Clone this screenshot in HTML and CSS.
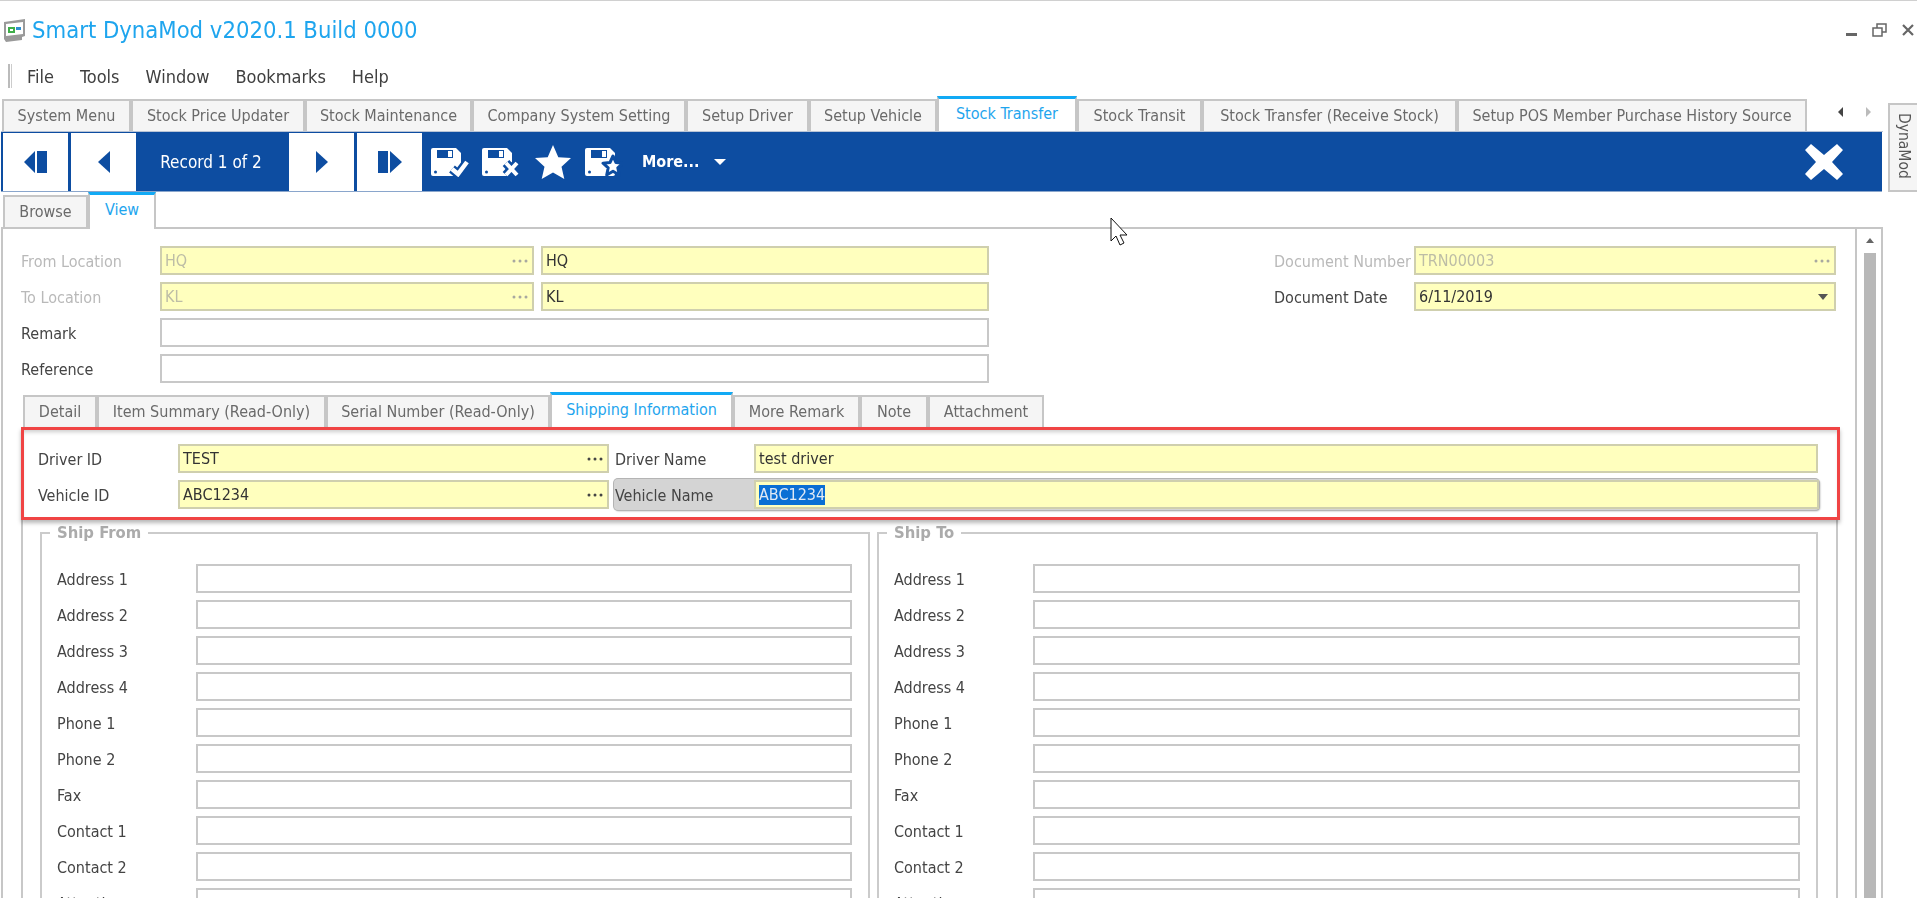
FILE: index.html
```html
<!DOCTYPE html>
<html lang="en">
<head>
<meta charset="utf-8">
<title>Smart DynaMod</title>
<link rel="stylesheet" href="styles.css">
</head>
<body>
<svg class="defs" width="0" height="0" aria-hidden="true">
  <symbol id="dots" viewBox="0 0 16 4"><circle cx="2" cy="2" r="1.5"/><circle cx="8" cy="2" r="1.5"/><circle cx="14" cy="2" r="1.5"/></symbol>
  <symbol id="floppy" viewBox="0 0 38 30">
    <path fill="#fff" d="M2 1h23l5 5v21a2 2 0 0 1-2 2H2a2 2 0 0 1-2-2V3a2 2 0 0 1 2-2z"/>
    <path fill="#0d4da1" d="M6 3h16v8H6z"/>
    <path fill="#fff" d="M17 4h4v6h-4z"/>
    <circle cx="4.500" cy="25" r="1.500" fill="#0d4da1"/>
  </symbol>
</svg>
<div class="app">
  <header class="titlebar">
    <svg class="appicon" viewBox="0 0 23 23" width="23" height="23">
      <path fill="#9a9a9a" d="M1 3l21-3v17l-3 1 0 3-16 2-2-3z"/>
      <path fill="#fff" d="M3 5l17-2v12L3 17z"/>
      <path fill="#3fae49" d="M5 8h7v6H5z"/>
      <path fill="#fff" d="M7 10h3v2H7z"/>
      <path fill="#2f8fd0" d="M13 8h5v3h-5z"/>
    </svg>
    <h1 class="apptitle">Smart DynaMod v2020.1 Build 0000</h1>
    <div class="winbtns">
      <svg viewBox="0 0 11 3" width="11" height="3"><path fill="#666" d="M0 0h11v3H0z"/></svg>
      <svg viewBox="0 0 15 14" width="15" height="14"><path fill="none" stroke="#666" stroke-width="1.500" d="M1 5h9v8H1zM5 5V1h9v8h-4"/></svg>
      <svg viewBox="0 0 12 12" width="12" height="12"><path stroke="#666" stroke-width="2.200" d="M1 1l10 10M11 1L1 11"/></svg>
    </div>
  </header>
  <nav class="menubar">
    <span class="grip"></span>
    <span>File</span><span>Tools</span><span>Window</span><span>Bookmarks</span><span>Help</span>
  </nav>
  <div class="workspace">
    <main class="main">
      <div class="doc-tabs">
        <div class="tab">System Menu</div>
        <div class="tab">Stock Price Updater</div>
        <div class="tab">Stock Maintenance</div>
        <div class="tab">Company System Setting</div>
        <div class="tab">Setup Driver</div>
        <div class="tab">Setup Vehicle</div>
        <div class="tab active">Stock Transfer</div>
        <div class="tab">Stock Transit</div>
        <div class="tab">Stock Transfer (Receive Stock)</div>
        <div class="tab">Setup POS Member Purchase History Source</div>
        <div class="scrollers">
          <svg viewBox="0 0 5 10" width="5" height="10"><path fill="#444" d="M5 0v10L0 5z"/></svg>
          <svg viewBox="0 0 5 10" width="5" height="10"><path fill="#bbb" d="M0 0v10l5-5z"/></svg>
        </div>
      </div>
      <div class="toolbar">
        <button class="navbtn"><svg viewBox="0 0 23 22" width="23" height="22"><path fill="#0d4da1" d="M11 0v22L0 11zM13 0h10v22H13z"/></svg></button>
        <button class="navbtn gap"><svg viewBox="0 0 12 22" width="12" height="22"><path fill="#0d4da1" d="M12 0v22L0 11z"/></svg></button>
        <span class="record">Record 1 of 2</span>
        <button class="navbtn"><svg viewBox="0 0 12 22" width="12" height="22"><path fill="#0d4da1" d="M0 0v22l12-11z"/></svg></button>
        <button class="navbtn gap"><svg viewBox="0 0 24 22" width="24" height="22"><path fill="#0d4da1" d="M0 0h10v22H0zM12 0v22l12-11z"/></svg></button>
        <svg class="tool first" viewBox="0 0 38 30" width="38" height="30">
          <use href="#floppy"/>
          <path fill="none" stroke="#0d4da1" stroke-width="9" d="M21 22l6 5 9-12"/>
          <path fill="none" stroke="#fff" stroke-width="4.500" d="M21 22l6 5 9-12"/>
        </svg>
        <svg class="tool" viewBox="0 0 38 30" width="38" height="30">
          <use href="#floppy"/>
          <path fill="none" stroke="#0d4da1" stroke-width="9" d="M24 16l11 12M35 16L24 28"/>
          <path fill="none" stroke="#fff" stroke-width="4" d="M24 16l11 12M35 16L24 28"/>
        </svg>
        <svg class="tool star" viewBox="0 0 36 34" width="36" height="34"><path fill="#fff" d="M18 0l5.300 12.300L36 13l-9.500 8.700L29.300 34 18 27.400 6.700 34l2.800-12.300L0 13l12.700-.700z"/></svg>
        <svg class="tool" viewBox="0 0 38 30" width="38" height="30">
          <use href="#floppy"/>
          <path fill="#fff" stroke="#0d4da1" stroke-width="3" stroke-linejoin="round" d="M28 9l3 6.500 7 .7-5.200 4.600L34.300 28 28 24.300 21.700 28l1.500-7.200L18 16.200l7-.7z"/>
        </svg>
        <span class="more">More...</span>
        <svg class="caret" viewBox="0 0 12 6" width="12" height="6"><path fill="#fff" d="M0 0h12L6 6z"/></svg>
        <svg class="closebig" viewBox="0 0 38 36" width="38" height="36"><path fill="#fff" d="M6 0l13 11L32 0l6 6-11 12 11 12-6 6-13-11L6 36l-6-6 11-12L0 6z"/></svg>
      </div>
      <div class="sub-tabs">
        <div class="tab">Browse</div>
        <div class="tab active">View</div>
      </div>
      <section class="content">
        <div class="form-area">
          <div class="top-form">
            <div class="top-left">
              <label class="muted">From Location</label>
              <div class="input yellow muted">HQ<svg class="dots"><use href="#dots"/></svg></div>
              <div class="input yellow">HQ</div>
              <label class="muted">To Location</label>
              <div class="input yellow muted">KL<svg class="dots"><use href="#dots"/></svg></div>
              <div class="input yellow">KL</div>
              <label>Remark</label>
              <div class="input wide"></div>
              <label>Reference</label>
              <div class="input wide"></div>
            </div>
            <div class="top-right">
              <label class="muted">Document Number</label>
              <div class="input yellow muted">TRN00003<svg class="dots"><use href="#dots"/></svg></div>
              <label>Document Date</label>
              <div class="input yellow">6/11/2019<svg class="dropcaret" viewBox="0 0 10 6" width="10" height="6"><path fill="#555" d="M0 0h10L5 6z"/></svg></div>
            </div>
          </div>
          <div class="inner-tabs">
            <div class="tab">Detail</div>
            <div class="tab">Item Summary (Read-Only)</div>
            <div class="tab">Serial Number (Read-Only)</div>
            <div class="tab active">Shipping Information</div>
            <div class="tab">More Remark</div>
            <div class="tab">Note</div>
            <div class="tab">Attachment</div>
          </div>
          <div class="highlight">
            <label>Driver ID</label>
            <div class="input yellow">TEST<svg class="dots dark"><use href="#dots"/></svg></div>
            <div class="named">
              <label>Driver Name</label>
              <div class="input yellow grow">test driver</div>
            </div>
            <label>Vehicle ID</label>
            <div class="input yellow">ABC1234<svg class="dots dark"><use href="#dots"/></svg></div>
            <div class="named focused">
              <label>Vehicle Name</label>
              <div class="input yellow grow"><span class="selected">ABC1234</span></div>
            </div>
          </div>
          <div class="ship-panel">
            <fieldset class="ship from">
              <legend>Ship From</legend>
              <div class="address-grid">
                <label>Address 1</label><div class="input"></div>
                <label>Address 2</label><div class="input"></div>
                <label>Address 3</label><div class="input"></div>
                <label>Address 4</label><div class="input"></div>
                <label>Phone 1</label><div class="input"></div>
                <label>Phone 2</label><div class="input"></div>
                <label>Fax</label><div class="input"></div>
                <label>Contact 1</label><div class="input"></div>
                <label>Contact 2</label><div class="input"></div>
                <label>Attention</label><div class="input"></div>
              </div>
            </fieldset>
            <fieldset class="ship to">
              <legend>Ship To</legend>
              <div class="address-grid">
                <label>Address 1</label><div class="input"></div>
                <label>Address 2</label><div class="input"></div>
                <label>Address 3</label><div class="input"></div>
                <label>Address 4</label><div class="input"></div>
                <label>Phone 1</label><div class="input"></div>
                <label>Phone 2</label><div class="input"></div>
                <label>Fax</label><div class="input"></div>
                <label>Contact 1</label><div class="input"></div>
                <label>Contact 2</label><div class="input"></div>
                <label>Attention</label><div class="input"></div>
              </div>
            </fieldset>
          </div>
        </div>
        <div class="scrollbar">
          <svg class="scroll-up" viewBox="0 0 8 5" width="8" height="5"><path fill="#666" d="M4 0l4 5H0z"/></svg>
          <div class="thumb"></div>
        </div>
      </section>
    </main>
    <aside class="side"><span class="sidetab">DynaMod</span></aside>
  </div>
  <svg class="cursor" viewBox="0 0 18 29" width="18" height="29"><path fill="#fff" stroke="#111" stroke-width="1" d="M1 1v23l5-5 4 9 4-2-4-8h7z"/></svg>
</div>
</body>
</html>
```
FILE: styles.css
```css
* { box-sizing: border-box; }
html, body { margin: 0; padding: 0; background: #fff; }
body { width: 1917px; height: 898px; overflow: hidden; }
.defs { position: absolute; }
.app {
  position: relative;
  width: 1917px;
  height: 898px;
  overflow: hidden;
  border-top: 1px solid #d0d0d0;
  font-family: "DejaVu Sans", "Noto Sans", sans-serif;
  font-stretch: condensed;
  font-size: 16px;
  color: #444;
  display: flex;
  flex-direction: column;
  filter: blur(0.35px);
}
label { display: flex; align-items: center; white-space: nowrap; padding-top: 1px; }

/* title + menu */
.titlebar { height: 58px; flex: none; display: flex; align-items: center; padding: 0 3px; }
.appicon { flex: none; margin-right: 6px; }
.apptitle { margin: 0; font-size: 23.6px; font-weight: 400; color: #1ea5ee; }
.winbtns { margin-left: auto; display: flex; align-items: center; gap: 15px; }
.winbtns svg:first-child { align-self: flex-end; margin-bottom: 1px; }
.menubar { height: 37px; padding-bottom: 3px; flex: none; display: flex; align-items: center; gap: 26px; padding-left: 8px; color: #3f3f3f; font-size: 18px; }
.grip { width: 4px; height: 24px; border-left: 2px solid #bbb; border-right: 1px solid #ccc; margin-right: -11px; }

.workspace { flex: 1; min-height: 0; display: flex; align-items: flex-start; }
.main { width: 1882px; margin-left: 1px; flex: none; height: 802px; display: flex; flex-direction: column; }

/* tabs */
.tab {
  display: flex;
  align-items: center;
  justify-content: center;
  white-space: nowrap;
  height: 32px;
  padding-bottom: 2px;
  background: #f5f5f5;
  color: #6a6a6a;
  border: 2px solid #c6c6c6;
  border-bottom: 0;
}
.tab.active {
  position: relative;
  z-index: 1;
  height: 35px;
  background: #fff;
  color: #1ea5ee;
  border-top: 3px solid #12aaf5;
  padding-bottom: 3px;
}
.doc-tabs {
  flex: none;
  height: 36px;
  display: grid;
  grid-template-columns: 129px 174px 167px 214px 123px 128px 140px 125px 255px 350px 1fr;
  align-items: end;
  padding-left: 1px;
  border-bottom: 1px solid #b8c4d6;
}
.scrollers { height: 32px; display: flex; justify-content: center; align-items: flex-start; gap: 23px; padding: 8px 0 0 18px; }

/* toolbar */
.toolbar { flex: none; height: 60px; margin-right: 1px; background: #0d4da1; display: flex; align-items: center; padding-left: 2px; color: #fff; border-bottom: 1px solid #8aa6cc; }
.navbtn { width: 65px; height: 58px; flex: none; border: 0; padding: 0; background: #fff; display: flex; align-items: center; justify-content: center; }
.navbtn.gap { margin-left: 3px; }
.record { width: 154px; margin-left: -1px; padding-right: 2px; text-align: center; font-size: 17px; }
.tool { flex: none; margin-left: 13px; }
.tool.first { margin-left: 9px; }
.tool.star { margin-left: 15px; margin-right: 1px; }
.more { margin-left: 19px; font-weight: 700; font-size: 16px; }
.caret { margin-left: 14px; }
.closebig { margin-left: auto; margin-right: 39px; }

/* sub tabs */
.sub-tabs { flex: none; height: 35px; display: grid; grid-template-columns: 85px 68px; align-items: end; padding-left: 2px; }
.sub-tabs .tab.active { margin-bottom: -2px; height: 37px; padding-bottom: 5px; }

/* content */
.content { flex: 1; min-height: 0; display: flex; border: 2px solid #c6c6c6; border-bottom: 0; }
.form-area { width: 1852px; flex: none; padding: 17px 19px 0 18px; }
.scrollbar { flex: 1; border-left: 2px solid #c6c6c6; display: flex; flex-direction: column; align-items: center; padding: 9px 0 0 1px; }
.scroll-up { flex: none; }
.thumb { width: 12px; flex: 1; margin-top: 10px; background: #b8b8b8; }

.input {
  height: 29px;
  border: 2px solid #c8c8c8;
  background: #fff;
  display: flex;
  align-items: center;
  padding: 0 3px;
  color: #333;
  white-space: nowrap;
  min-width: 0;
}
.input.yellow { background: #ffffbe; border-color: #cfcfae; }
.muted { color: #b9b9b9; }
.input.muted { color: #bdbda6; }
.dots { width: 16px; height: 4px; margin-left: auto; margin-right: 1px; fill: #a8a8a0; flex: none; }
.dots.dark { fill: #444; }
.dropcaret { margin-left: auto; margin-right: 3px; flex: none; }

.top-form { display: flex; justify-content: space-between; }
.top-left { display: grid; grid-template-columns: 132px 374px 448px; gap: 7px; }
.top-left .wide { grid-column: 2 / 4; }
.top-right { display: grid; grid-template-columns: 133px 422px; gap: 7px; align-self: flex-start; }

.inner-tabs { margin-top: 9px; margin-left: 2px; height: 35px; display: grid; grid-template-columns: 74px 229px 224px 183px 127px 68px 116px; align-items: end; }
.inner-tabs .tab.active { height: 36px; margin-bottom: -1px; padding-bottom: 4px; }

.highlight {
  position: relative;
  z-index: 2;
  width: 1819px;
  height: 93px;
  border: 3px solid #f04444;
  box-shadow: 0 3px 4px rgba(0, 0, 0, 0.28), inset 0 4px 4px -2px rgba(0, 0, 0, 0.2);
  padding: 14px 0 0 14px;
  display: grid;
  grid-template-columns: 140px 431px 1fr;
  grid-auto-rows: 29px;
  row-gap: 7px;
  background: #fff;
}
.named { display: flex; margin-left: 6px; width: 1203px; }
.named label { width: 139px; flex: none; }
.named .grow { flex: 1; }
.named.focused {
  margin: -1px 0 -1px 5px;
  width: 1205px;
  height: 31px;
  padding-left: 1px;
  background: #d4d4d4;
  border-radius: 4px;
  box-shadow: 0 0 0 1px #b4b4b4, 1px 1px 2px rgba(0, 0, 0, 0.4);
}
.named.focused label { width: 139px; }
.named.focused .input { margin: 1px 0; }
.selected { background: #0a6fd4; color: #dfe9f5; padding: 2px 0; line-height: 16px; }

.ship-panel {
  width: 1817px;
  padding: 3px 18px 0 17px;
  display: flex;
  gap: 7px;
  border-left: 2px solid #c8c8c8;
  border-right: 2px solid #c8c8c8;
  height: 400px;
}
.ship { margin: 0; min-width: 0; border: 2px solid #cbcbcb; flex: none; height: 500px; }
.ship.from { width: 830px; padding: 21px 16px 0 15px; }
.ship.to { width: 941px; padding: 21px 16px 0 15px; }
.ship legend { margin-left: -7px; padding: 0 7px; height: 20px; font-size: 16.500px; line-height: 20px; font-weight: 700; color: #ababab; }
.address-grid { display: grid; grid-template-columns: 132px 1fr; gap: 7px; }

/* right rail */
.side { flex: none; width: 34px; padding: 7px 0 0 5px; }
.sidetab {
  display: flex;
  align-items: center;
  justify-content: center;
  height: 89px;
  width: 29px;
  writing-mode: vertical-rl;
  background: #f5f5f5;
  border: 2px solid #c6c6c6;
  border-right: 0;
  color: #555;
  padding-bottom: 4px;
  font-size: 15.500px;
}

.cursor { position: absolute; left: 1110px; top: 216px; }
```
